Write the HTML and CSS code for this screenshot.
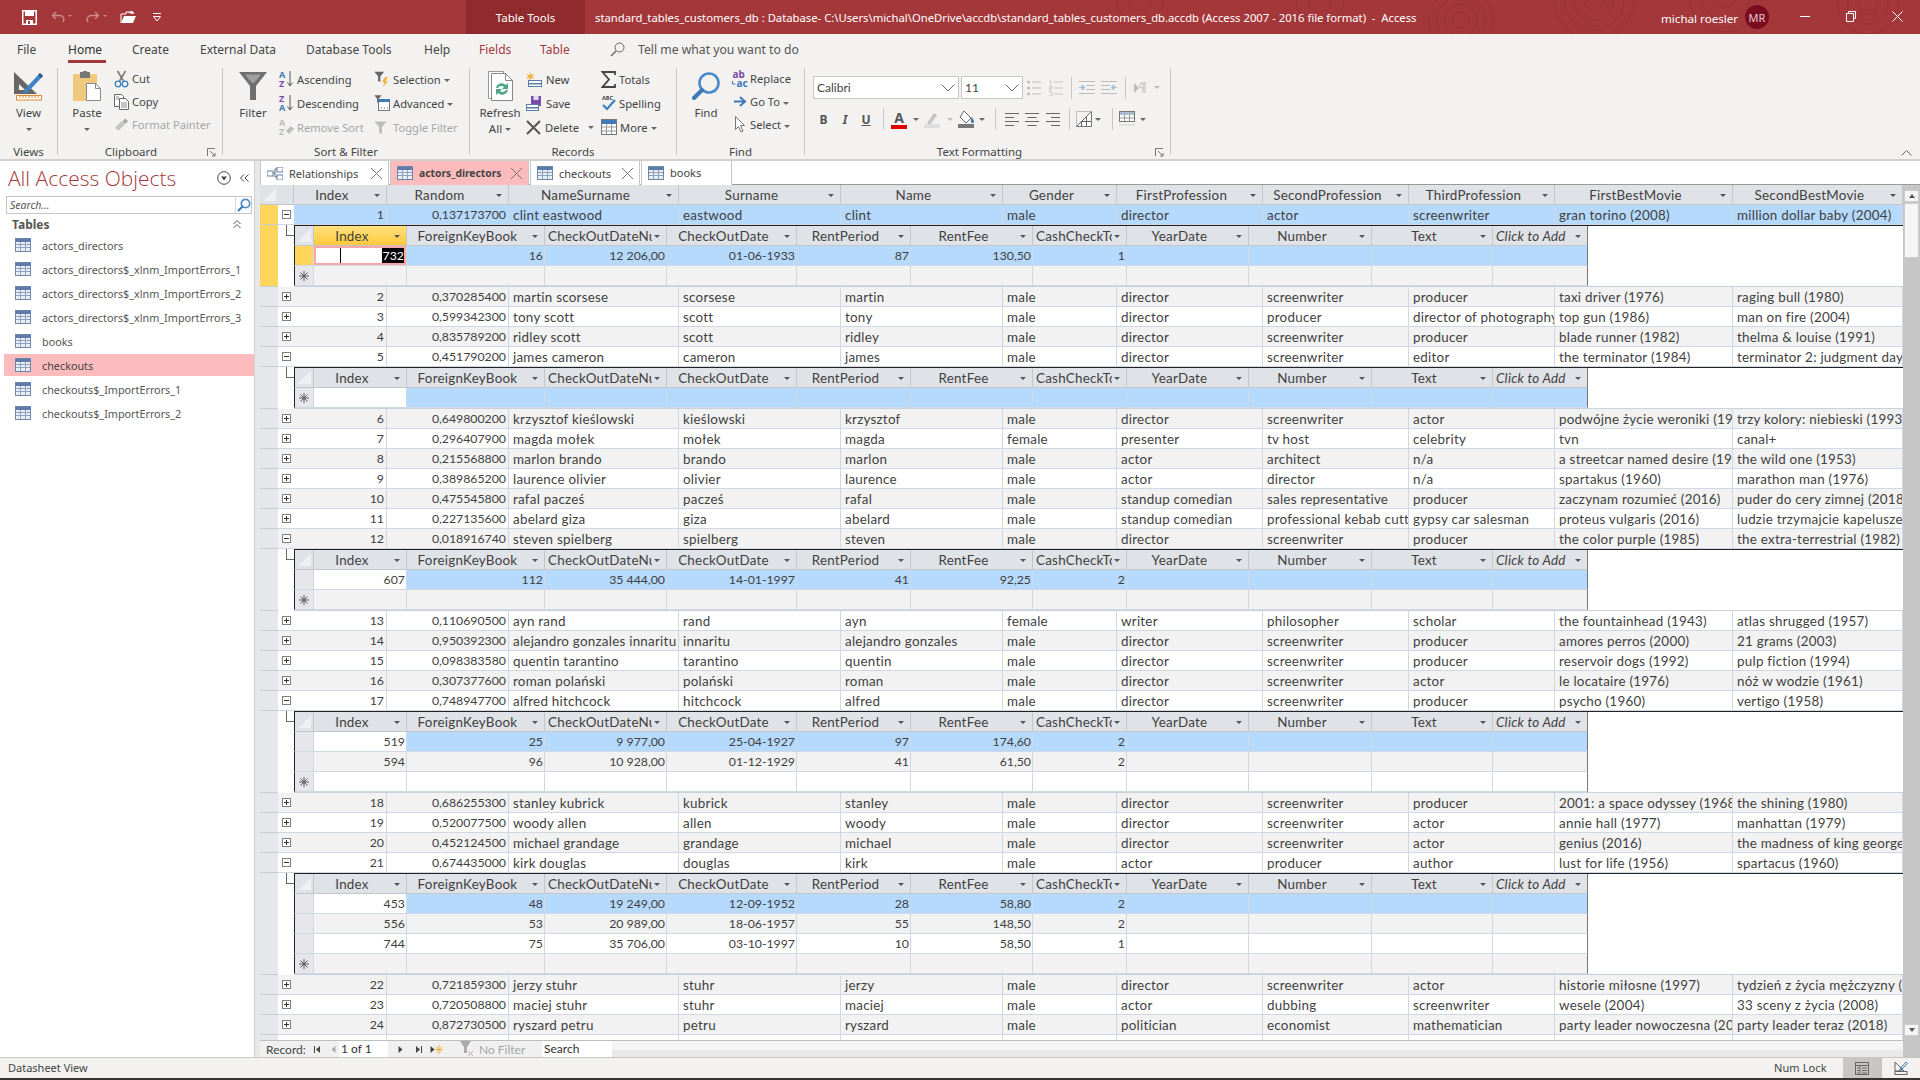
FILE: index.html
```html
<!DOCTYPE html>
<html lang="en">
<head>
<meta charset="utf-8">
<title>standard_tables_customers_db - Access</title>
<link rel="stylesheet" href="styles.css">
</head>
<body>
<svg class="sprite" width="0" height="0" aria-hidden="true">
  <defs>
    <symbol id="tbl" viewBox="0 0 16 14">
      <rect x=".5" y=".5" width="15" height="13" fill="#e9eef6" stroke="#6f86a8"/>
      <rect x="1" y="1" width="14" height="3" fill="#5c7cab"/>
      <path d="M1 6.5h14M1 9.5h14M5.5 4v9M10.5 4v9" stroke="#8ea2c0" fill="none"/>
    </symbol>
    <symbol id="star" viewBox="0 0 10 10">
      <path d="M5 0v10M0 5h10M1.5 1.5l7 7M8.5 1.5l-7 7" stroke="#555" stroke-width="1" fill="none"/>
    </symbol>
    <symbol id="funnel" viewBox="0 0 16 14">
      <path d="M.5 .5h13L8.5 6.5v7h-3v-7z" fill="currentColor"/>
    </symbol>
  </defs>
</svg>

<header class="titlebar">
  <svg class="wood" width="900" height="34" viewBox="0 0 900 34" aria-hidden="true">
    <g fill="none" stroke="#8e2d30" stroke-opacity=".45">
      <circle cx="441" cy="20" r="8"/><circle cx="441" cy="20" r="16"/><circle cx="441" cy="20" r="24"/><circle cx="441" cy="20" r="32"/>
      <circle cx="574" cy="0" r="10"/><circle cx="574" cy="0" r="20"/><circle cx="574" cy="0" r="30"/><circle cx="574" cy="0" r="40"/>
      <circle cx="705" cy="-4" r="12"/><circle cx="705" cy="-4" r="24"/><circle cx="705" cy="-4" r="36"/>
      <circle cx="848" cy="4" r="10"/><circle cx="848" cy="4" r="20"/><circle cx="848" cy="4" r="30"/>
      <circle cx="120" cy="-2" r="12"/><circle cx="120" cy="-2" r="24"/>
      <circle cx="300" cy="0" r="12"/><circle cx="300" cy="0" r="24"/>
    </g>
  </svg>
  <div class="qat">
    <svg class="q-save" width="15" height="15" viewBox="0 0 15 15"><path d="M.75 .75h13.5v13.5H.75z" fill="none" stroke="#fff" stroke-width="1.5"/><path d="M3 1h9v5H3zM4 10h7v4H4z" fill="#fff"/><rect x="6" y="11" width="2" height="3" fill="#a4373a"/></svg>
    <svg class="q-undo" width="22" height="12" viewBox="0 0 22 12"><path d="M5 1L1.5 4.5 5 8M2 4.5h7a4 4 0 0 1 3 6.5" fill="none" stroke="#c98c8e" stroke-width="1.4"/><path d="M17 4h4l-2 2z" fill="#c98c8e"/></svg>
    <svg class="q-redo" width="22" height="12" viewBox="0 0 22 12"><path d="M9 1l3.500 3.500L9 8M12 4.500H5a4 4 0 0 0-3 6.500" fill="none" stroke="#c98c8e" stroke-width="1.4"/><path d="M17 4h4l-2 2z" fill="#c98c8e"/></svg>
    <svg class="q-open" width="17" height="14" viewBox="0 0 17 14"><path d="M1 13V4h5V2h7v2" fill="none" stroke="#fff"/><path d="M1 13l3-7h12l-3 7z" fill="#fff"/><path d="M8 3l4-2 2 3" fill="#fff"/></svg>
    <svg class="q-more" width="8" height="9" viewBox="0 0 8 9"><path d="M0 .5h8" stroke="#fff"/><path d="M.5 3.500h7L4 8z" fill="none" stroke="#fff"/></svg>
  </div>
  <div class="ctx">Table Tools</div>
  <div class="doc-title">standard_tables_customers_db : Database- C:\Users\michal\OneDrive\accdb\standard_tables_customers_db.accdb (Access 2007 - 2016 file format) &nbsp;-&nbsp; Access</div>
  <div class="user">michal roesler</div>
  <div class="avatar">MR</div>
  <div class="win">
    <svg width="10" height="10" viewBox="0 0 10 10"><path d="M0 5.500h10" stroke="#fff"/></svg>
    <svg width="10" height="11" viewBox="0 0 10 11"><path d="M2.500 2.500V.5h7v7h-2M.5 2.500h7v8h-7z" fill="none" stroke="#fff"/></svg>
    <svg width="11" height="11" viewBox="0 0 11 11"><path d="M.5 .5l10 10M10.500 .5l-10 10" stroke="#fff" fill="none"/></svg>
  </div>
</header>

<section class="ribbon">
  <nav class="rtabs">
    <span class="rt">File</span>
    <span class="rt rt-on"><b>Home</b></span>
    <span class="rt">Create</span>
    <span class="rt">External Data</span>
    <span class="rt">Database Tools</span>
    <span class="rt">Help</span>
    <span class="rt rt-red">Fields</span>
    <span class="rt rt-red">Table</span>
    <svg class="tell-ic" width="15" height="15" viewBox="0 0 15 15"><circle cx="9.500" cy="5.500" r="4.500" fill="none" stroke="#666"/><path d="M6 9l-5 5" stroke="#666" stroke-width="1.400"/></svg>
    <span class="rt tell">Tell me what you want to do</span>
  </nav>
  <div class="groups">
    <div class="group g-views">
      <div class="gbody">
        <div class="big bw-views">
          <svg width="31" height="30" viewBox="0 0 31 30"><path d="M1 1v22h23z" fill="#666"/><path d="M6 13v6h6z" fill="#f3f2f1"/><path d="M27 2l3 3-15 16-5 2 2-5z" fill="#3f7fc4"/><path d="M27 2l3 3-2 2-3-3z" fill="#2a5d96"/><rect x="3.500" y="24.500" width="25" height="4.500" fill="#fff" stroke="#e08a2c"/><path d="M7 25v2M10 25v2M13 25v2M16 25v2M19 25v2M22 25v2M25 25v2" stroke="#e08a2c"/></svg>
          <span class="bl">View</span><i class="dd"></i>
        </div>
      </div>
      <div class="glabel">Views</div>
    </div>
    <div class="sep"></div>
    <div class="group g-clip">
      <div class="gbody">
        <div class="big bw-paste">
          <svg width="28" height="30" viewBox="0 0 28 30"><rect x="0" y="3" width="24" height="27" rx="1" fill="#f0c97f"/><rect x="7" y="1" width="10" height="6" fill="#777"/><rect x="10" y="0" width="4" height="3" fill="#777"/><path d="M13.500 12.500h9l5 5v12h-14z" fill="#fff" stroke="#8a8a8a"/><path d="M22.500 12.500v5h5" fill="none" stroke="#8a8a8a"/></svg>
          <span class="bl">Paste</span><i class="dd"></i>
        </div>
        <div class="list l23 lw-clip">
          <div class="it"><svg class="ic" width="14" height="18" viewBox="0 0 14 18"><path d="M3 1l6 10M11 1L5 11" stroke="#777" stroke-width="1.500" fill="none"/><circle cx="3.500" cy="14" r="2.800" fill="none" stroke="#3a7fc1" stroke-width="1.300"/><circle cx="10.500" cy="14" r="2.800" fill="none" stroke="#3a7fc1" stroke-width="1.300"/></svg><span>Cut</span></div>
          <div class="it"><svg class="ic" width="15" height="16" viewBox="0 0 15 16"><path d="M.5 .5h7l2 2v10H.5z" fill="#fff" stroke="#666"/><path d="M5.500 4.500h6l3 3v8h-9z" fill="#fff" stroke="#666"/><path d="M7 9h6M7 11h6M7 13h6M2 3h3M2 5h3" stroke="#888"/></svg><span>Copy</span></div>
          <div class="it off"><svg class="ic" width="16" height="15" viewBox="0 0 16 15"><path d="M1 11l7-7 4 3-7 7z" fill="#c4c4c4"/><path d="M9 4l3-3 3 3-3 3z" fill="#a8a8a8"/></svg><span>Format Painter</span></div>
        </div>
      </div>
      <div class="glabel lb-clip">Clipboard<svg class="launch" width="9" height="9" viewBox="0 0 9 9"><path d="M.5 8V.5H8M3 3l5 5M8 5v3H5" fill="none" stroke="#777"/></svg></div>
    </div>
    <div class="sep"></div>
    <div class="group g-sort">
      <div class="gbody">
        <div class="big bw-filter">
          <svg width="28" height="28" viewBox="0 0 28 28"><path d="M0 0h28L17 14v14h-6V14z" fill="#6f6f6f"/><path d="M6 2.500h16L15 11h-2z" fill="#a0a0a0"/></svg>
          <span class="bl">Filter</span>
        </div>
        <div class="list l24 lw-sort1">
          <div class="it"><svg class="ic" width="15" height="18" viewBox="0 0 15 18"><text x="0" y="8" class="az c-b">A</text><text x="0" y="17" class="az c-p">Z</text><path d="M11 1v14M8.500 12.500L11 16l2.500-3.500" fill="none" stroke="#555"/></svg><span>Ascending</span></div>
          <div class="it"><svg class="ic" width="15" height="18" viewBox="0 0 15 18"><text x="0" y="8" class="az c-p">Z</text><text x="0" y="17" class="az c-b">A</text><path d="M11 1v14M8.500 12.500L11 16l2.500-3.500" fill="none" stroke="#555"/></svg><span>Descending</span></div>
          <div class="it off"><svg class="ic" width="15" height="18" viewBox="0 0 15 18"><text x="0" y="8" class="az c-g">A</text><text x="0" y="17" class="az c-g">Z</text><path d="M7 13l5-5 3 3-5 5z" fill="#bdbdbd"/></svg><span>Remove Sort</span></div>
        </div>
        <div class="list l24">
          <div class="it"><svg class="ic ic-f" width="16" height="16" viewBox="0 0 16 16"><use href="#funnel" width="12" height="11" x="0" y="0" class="c-f"/><path d="M11 6l-3 5h2.500L9 16l5-6h-2.500L14 6z" fill="#f2b33d"/></svg><span class="dda">Selection</span></div>
          <div class="it"><svg class="ic ic-f" width="16" height="16" viewBox="0 0 16 16"><use href="#funnel" width="9" height="8" x="0" y="0" class="c-f"/><rect x="4.500" y="4.500" width="11" height="11" fill="#fff" stroke="#777"/><rect x="4" y="4" width="12" height="3" fill="#3f79b8"/><path d="M7 13h1M10 13h1M13 13h1" stroke="#555"/></svg><span class="dda">Advanced</span></div>
          <div class="it off"><svg class="ic ic-f" width="16" height="16" viewBox="0 0 16 16"><use href="#funnel" width="15" height="15" x="0" y="1" class="c-g2"/></svg><span>Toggle Filter</span></div>
        </div>
      </div>
      <div class="glabel">Sort &amp; Filter</div>
    </div>
    <div class="sep"></div>
    <div class="group g-rec">
      <div class="gbody">
        <div class="big bw-refresh">
          <svg width="25" height="30" viewBox="0 0 25 30"><path d="M.5 .5h15v27H.5z" fill="#fff" stroke="#999"/><path d="M3.500 2.500h14l7 7v20h-21z" fill="#fff" stroke="#888"/><path d="M17.500 2.500v7h7" fill="none" stroke="#888"/><path d="M8 17a6 6 0 0 1 10-3l2-2v6h-6l2-2a4 4 0 0 0-6 1zM20 19a6 6 0 0 1-10 3l-2 2v-6h6l-2 2a4 4 0 0 0 6-1z" fill="#4fa586"/></svg>
          <span class="bl">Refresh</span><span class="bl bl2 dda">All</span>
        </div>
        <div class="list l24 lw-rec">
          <div class="it"><svg class="ic" width="16" height="15" viewBox="0 0 16 15"><path d="M4.500 0l1 3 3-1-2 2.500L8 7 5 6 4 9 3 6 0 7l2-2.500L.5 2l3 1z" fill="#f0b64a"/><rect x="2.500" y="8.500" width="13" height="6" fill="#fff" stroke="#5b7fab"/><rect x="2" y="11" width="14" height="1.500" fill="#5b7fab"/></svg><span>New</span></div>
          <div class="it"><svg class="ic" width="16" height="15" viewBox="0 0 16 15"><rect x="5" y="0" width="10" height="10" fill="#7b4fa8"/><rect x="7.500" y="0" width="5" height="4" fill="#e6ddf0"/><rect x=".5" y="8.500" width="12" height="6" fill="#fff" stroke="#5b7fab"/><rect x="0" y="11" width="13" height="1.500" fill="#5b7fab"/></svg><span>Save</span></div>
          <div class="it"><svg class="ic" width="15" height="15" viewBox="0 0 15 15"><path d="M1 1l13 13M14 1L1 14" stroke="#555" stroke-width="2" fill="none"/></svg><span>Delete</span><i class="dd dd-del"></i></div>
        </div>
        <div class="list l24">
          <div class="it"><svg class="ic" width="15" height="17" viewBox="0 0 15 17"><path d="M14 4V1H1.500L8 8.500 1.500 16H14v-3" fill="none" stroke="#444" stroke-width="1.800"/></svg><span>Totals</span></div>
          <div class="it"><svg class="ic" width="15" height="18" viewBox="0 0 15 18"><text x="1" y="6" class="abc">ABC</text><path d="M2 11l4 4 8-9" fill="none" stroke="#3a7fc1" stroke-width="2.200"/></svg><span>Spelling</span></div>
          <div class="it"><svg class="ic" width="16" height="16" viewBox="0 0 16 16"><rect x=".5" y=".5" width="15" height="15" fill="#fff" stroke="#777"/><rect x="1" y="1" width="14" height="4" fill="#3f79b8"/><path d="M1 8h14M1 12h14M5.500 5v10M10.500 5v10" stroke="#999"/></svg><span class="dda">More</span></div>
        </div>
      </div>
      <div class="glabel">Records</div>
    </div>
    <div class="sep"></div>
    <div class="group g-find">
      <div class="gbody">
        <div class="big bw-find">
          <svg width="28" height="28" viewBox="0 0 28 28"><circle cx="17" cy="11" r="9.500" fill="none" stroke="#4b8bc9" stroke-width="2.600"/><path d="M10 18L2 26" stroke="#3f79b8" stroke-width="4" stroke-linecap="round"/></svg>
          <span class="bl">Find</span>
        </div>
        <div class="list l23 lw-find">
          <div class="it"><svg class="ic" width="17" height="18" viewBox="0 0 17 18"><text x="1" y="8" class="ab c-p">ab</text><text x="5" y="17" class="ab c-b">ac</text><path d="M1 11v3h3" fill="none" stroke="#3f79b8"/></svg><span>Replace</span></div>
          <div class="it"><svg class="ic ic-go" width="12" height="11" viewBox="0 0 12 11"><path d="M0 5.500h10M6 1l5 4.500L6 10" fill="none" stroke="#3f79b8" stroke-width="2"/></svg><span class="dda">Go To</span></div>
          <div class="it"><svg class="ic ic-go" width="10" height="17" viewBox="0 0 10 17"><path d="M.5 .5v13l3-3 2.500 5.500 2-1-2.500-5.500h4z" fill="#fff" stroke="#777"/></svg><span class="dda">Select</span></div>
        </div>
      </div>
      <div class="glabel">Find</div>
    </div>
    <div class="sep"></div>
    <div class="group g-text">
      <div class="gbody tf">
        <div class="tf-row1">
          <div class="combo cw-font"><span>Calibri</span><svg width="14" height="8" viewBox="0 0 14 8"><path d="M.5 .5L7 7 13.500 .5" fill="none" stroke="#666"/></svg></div>
          <div class="combo cw-size"><span>11</span><svg width="14" height="8" viewBox="0 0 14 8"><path d="M.5 .5L7 7 13.500 .5" fill="none" stroke="#666"/></svg></div>
          <div class="cell w22"><svg width="14" height="16" viewBox="0 0 14 16"><path d="M5 2h9M5 8h9M5 14h9" stroke="#bbb"/><circle cx="1.500" cy="2" r="1.500" fill="#bbb"/><circle cx="1.500" cy="8" r="1.500" fill="#bbb"/><circle cx="1.500" cy="14" r="1.500" fill="#bbb"/></svg></div>
          <div class="cell w22"><svg width="14" height="16" viewBox="0 0 14 16"><path d="M5 2h9M5 8h9M5 14h9M1.500 0v4M0 6h3v2H0v2h3M0 12h3v4H0" stroke="#bbb" fill="none" stroke-width=".8"/></svg></div>
          <div class="vsep vs1"></div>
          <div class="cell w22"><svg width="16" height="14" viewBox="0 0 16 14"><path d="M0 .5h16M7 4.500h9M7 8.500h9M0 12.500h16" stroke="#bbb"/><path d="M0 6.500h4M3 4l3 2.500L3 9z" fill="#9fc0dd" stroke="#9fc0dd"/></svg></div>
          <div class="cell w22"><svg width="16" height="14" viewBox="0 0 16 14"><path d="M0 .5h16M0 4.500h9M0 8.500h9M0 12.500h16" stroke="#bbb"/><path d="M16 6.500h-4M13 4l-3 2.500L13 9z" fill="#9fc0dd" stroke="#9fc0dd"/></svg></div>
          <div class="vsep vs2"></div>
          <div class="cell w28"><svg width="12" height="12" viewBox="0 0 12 12"><path d="M0 1l5 5-5 5z" fill="#bbb"/><path d="M8 1h4M8 1a2.500 2.500 0 0 0 0 5h1M9 1v10M11 1v10" stroke="#bbb" fill="none"/></svg></div>
          <i class="dd dd-off"></i>
        </div>
        <div class="tf-row2">
          <b class="fb">B</b><i class="fi">I</i><span class="fu">U</span><div class="vsep"></div>
          <div class="cell fa"><span>A</span></div><i class="dd"></i>
          <div class="cell"><svg width="17" height="18" viewBox="0 0 17 18"><path d="M3 13l7-10 3 2-7 10z" fill="#c4c4c4"/><rect x="0" y="14" width="16" height="4" fill="#dedede"/></svg></div><i class="dd dd-off"></i>
          <div class="cell"><svg width="17" height="18" viewBox="0 0 17 18"><path d="M6 1l7 7-5 5-6-6z" fill="#fff" stroke="#666"/><path d="M13 7c2 2 3 3 3 4.500a1.500 1.500 0 0 1-3 0z" fill="#3f79b8"/><rect x="0" y="14" width="16" height="4" fill="#777"/></svg></div><i class="dd"></i>
          <div class="vsep"></div>
          <div class="cell"><svg class="al" width="14" height="13" viewBox="0 0 14 13"><path d="M0 .5h14M0 4.500h9M0 8.500h14M0 12.500h9" stroke="#666"/></svg></div>
          <div class="cell"><svg class="al" width="14" height="13" viewBox="0 0 14 13"><path d="M0 .5h14M2.500 4.500h9M0 8.500h14M2.500 12.500h9" stroke="#666"/></svg></div>
          <div class="cell"><svg class="al" width="14" height="13" viewBox="0 0 14 13"><path d="M0 .5h14M5 4.500h9M0 8.500h14M5 12.500h9" stroke="#666"/></svg></div>
          <div class="vsep"></div>
          <div class="cell"><svg width="16" height="16" viewBox="0 0 16 16"><path d="M.5 15.500h15V.5z" fill="#fff" stroke="#666"/><path d="M.5 .5h15v15H.5z" fill="none" stroke="#888" stroke-dasharray="1 1"/><path d="M10.500 5v10M5.500 10v5M5 10.500h10" stroke="#666"/></svg></div><i class="dd"></i>
          <div class="vsep"></div>
          <div class="cell"><svg width="16" height="17" viewBox="0 0 16 17"><rect x=".5" y=".5" width="15" height="10" fill="#fff" stroke="#777"/><rect x="1" y="1" width="14" height="3" fill="#aabbd2"/><path d="M1 7h14M5.500 4v6M10.500 4v6" stroke="#999"/><rect x="0" y="13" width="16" height="2" fill="#e2e2e2"/></svg></div><i class="dd"></i>
        </div>
      </div>
      <div class="glabel lb-text">Text Formatting<svg class="launch" width="9" height="9" viewBox="0 0 9 9"><path d="M.5 8V.5H8M3 3l5 5M8 5v3H5" fill="none" stroke="#777"/></svg></div>
    </div>
    <div class="sep"></div>
    <svg class="collapse" width="11" height="6" viewBox="0 0 11 6"><path d="M.5 5.500l5-5 5 5" fill="none" stroke="#666"/></svg>
  </div>
</section>

<main class="main">
  <aside class="nav">
    <div class="nav-head">
      <span class="nav-title">All Access Objects</span>
      <svg class="nav-menu" width="14" height="14" viewBox="0 0 14 14"><circle cx="7" cy="7" r="6.300" fill="none" stroke="#444"/><path d="M4 5.500h6L7 9.500z" fill="#444"/></svg>
      <svg class="nav-shut" width="9" height="8" viewBox="0 0 9 8"><path d="M4 .5L.5 4 4 7.500M8.500 .5L5 4l3.500 3.500" fill="none" stroke="#444"/></svg>
    </div>
    <div class="nav-search"><span>Search...</span><i class="sbtn"><svg width="14" height="14" viewBox="0 0 14 14"><circle cx="8.500" cy="5.500" r="4.200" fill="none" stroke="#4b8bc9" stroke-width="1.700"/><path d="M5.500 8.500L1 13" stroke="#3f79b8" stroke-width="2.200"/></svg></i></div>
    <div class="nav-sec"><span>Tables</span><svg width="8" height="9" viewBox="0 0 8 9"><path d="M.5 4L4 .5 7.500 4M.5 8L4 4.500 7.500 8" fill="none" stroke="#555"/></svg></div>
    <ul class="nav-list">
      <li><svg width="16" height="14"><use href="#tbl"/></svg><span>actors_directors</span></li>
      <li><svg width="16" height="14"><use href="#tbl"/></svg><span>actors_directors$_xlnm_ImportErrors_1</span></li>
      <li><svg width="16" height="14"><use href="#tbl"/></svg><span>actors_directors$_xlnm_ImportErrors_2</span></li>
      <li><svg width="16" height="14"><use href="#tbl"/></svg><span>actors_directors$_xlnm_ImportErrors_3</span></li>
      <li><svg width="16" height="14"><use href="#tbl"/></svg><span>books</span></li>
      <li class="on"><svg width="16" height="14"><use href="#tbl"/></svg><span>checkouts</span></li>
      <li><svg width="16" height="14"><use href="#tbl"/></svg><span>checkouts$_ImportErrors_1</span></li>
      <li><svg width="16" height="14"><use href="#tbl"/></svg><span>checkouts$_ImportErrors_2</span></li>
    </ul>
  </aside>
  <div class="split"></div>
  <div class="doc">
    <div class="doctabs">
      <div class="dt dt-rel"><svg width="16" height="13" viewBox="0 0 16 13"><rect x="0" y="4" width="6" height="5" fill="#fff" stroke="#5c7cab"/><rect x="10" y="0" width="6" height="5" fill="#fff" stroke="#5c7cab"/><rect x="10" y="8" width="6" height="5" fill="#fff" stroke="#5c7cab"/><path d="M6 6h2V2h2M8 6v4h2" fill="none" stroke="#666"/></svg><span>Relationships</span><i class="x"></i></div>
      <div class="dt dt-act"><svg width="16" height="14"><use href="#tbl"/></svg><span>actors_directors</span><i class="x"></i></div>
      <div class="dt dt-chk"><svg width="16" height="14"><use href="#tbl"/></svg><span>checkouts</span><i class="x"></i></div>
      <div class="dt dt-bks"><svg width="16" height="14"><use href="#tbl"/></svg><span>books</span></div>
    </div>
    <div class="sheetarea">
      <div class="sheetcol">
        <div class="sheet">
<table class="grid">
<colgroup><col class="c1"><col class="c2"><col class="c3"><col class="c4"><col class="c5"><col class="c6"><col class="c7"><col class="c8"><col class="c9"><col class="c10"><col class="c11"><col class="c12"><col class="c13"></colgroup>
<thead><tr>
<th colspan="2" class="corner"></th>
<th><div class="h"><span>Index</span></div></th><th><div class="h"><span>Random</span></div></th><th><div class="h"><span>NameSurname</span></div></th><th><div class="h"><span>Surname</span></div></th><th><div class="h"><span>Name</span></div></th><th><div class="h"><span>Gender</span></div></th><th><div class="h"><span>FirstProfession</span></div></th><th><div class="h"><span>SecondProfession</span></div></th><th><div class="h"><span>ThirdProfession</span></div></th><th><div class="h"><span>FirstBestMovie</span></div></th><th><div class="h"><span>SecondBestMovie</span></div></th>
</tr></thead>
<tbody>
<tr class="cur"><td class="s yl"></td><td class="e wh"><i class="bx mn"></i></td><td class="n">1</td><td class="n">0,137173700</td><td>clint eastwood</td><td>eastwood</td><td>clint</td><td>male</td><td>director</td><td>actor</td><td>screenwriter</td><td>gran torino (2008)</td><td>million dollar baby (2004)</td></tr>
<tr class="subrow"><td class="s yl"></td><td class="tree"><div class="tl"></div></td><td colspan="11" class="subc">
<table class="sub"><colgroup><col class="d0"><col class="d1"><col class="d2"><col class="d3"><col class="d4"><col class="d5"><col class="d6"><col class="d7"><col class="d8"><col class="d9"><col class="d10"><col class="d11"></colgroup>
<thead><tr><th class="corner sc"></th><th class="hy"><div class="h"><span>Index</span></div></th><th><div class="h"><span>ForeignKeyBook</span></div></th><th><div class="h hl"><span>CheckOutDateNum</span></div></th><th><div class="h"><span>CheckOutDate</span></div></th><th><div class="h"><span>RentPeriod</span></div></th><th><div class="h"><span>RentFee</span></div></th><th><div class="h hl"><span>CashCheckTotal</span></div></th><th><div class="h"><span>YearDate</span></div></th><th><div class="h"><span>Number</span></div></th><th><div class="h"><span>Text</span></div></th><th class="last"><div class="h hl ca"><span>Click to Add</span></div></th></tr></thead>
<tbody>
<tr class="cur"><td class="ss yl"></td><td class="edit"><span class="ed"><i class="caret"></i><em>732</em></span></td><td class="n">16</td><td class="n">12 206,00</td><td class="n">01-06-1933</td><td class="n">87</td><td class="n">130,50</td><td class="n">1</td><td></td><td></td><td></td><td class="last"></td></tr>
<tr class="gr"><td class="ss"><svg class="st" width="10" height="10"><use href="#star"/></svg></td><td></td><td></td><td></td><td></td><td></td><td></td><td></td><td></td><td></td><td></td><td class="last"></td></tr>
</tbody></table></td></tr>
<tr class="gr"><td class="s"></td><td class="e"><i class="bx"></i></td><td class="n">2</td><td class="n">0,370285400</td><td>martin scorsese</td><td>scorsese</td><td>martin</td><td>male</td><td>director</td><td>screenwriter</td><td>producer</td><td>taxi driver (1976)</td><td>raging bull (1980)</td></tr>
<tr><td class="s"></td><td class="e"><i class="bx"></i></td><td class="n">3</td><td class="n">0,599342300</td><td>tony scott</td><td>scott</td><td>tony</td><td>male</td><td>director</td><td>producer</td><td>director of photography</td><td>top gun (1986)</td><td>man on fire (2004)</td></tr>
<tr class="gr"><td class="s"></td><td class="e"><i class="bx"></i></td><td class="n">4</td><td class="n">0,835789200</td><td>ridley scott</td><td>scott</td><td>ridley</td><td>male</td><td>director</td><td>screenwriter</td><td>producer</td><td>blade runner (1982)</td><td>thelma &amp; louise (1991)</td></tr>
<tr><td class="s"></td><td class="e"><i class="bx mn"></i></td><td class="n">5</td><td class="n">0,451790200</td><td>james cameron</td><td>cameron</td><td>james</td><td>male</td><td>director</td><td>screenwriter</td><td>editor</td><td>the terminator (1984)</td><td>terminator 2: judgment day (1991)</td></tr>
<tr class="subrow"><td class="s"></td><td class="tree"><div class="tl"></div></td><td colspan="11" class="subc">
<table class="sub"><colgroup><col class="d0"><col class="d1"><col class="d2"><col class="d3"><col class="d4"><col class="d5"><col class="d6"><col class="d7"><col class="d8"><col class="d9"><col class="d10"><col class="d11"></colgroup>
<thead><tr><th class="corner sc"></th><th><div class="h"><span>Index</span></div></th><th><div class="h"><span>ForeignKeyBook</span></div></th><th><div class="h hl"><span>CheckOutDateNum</span></div></th><th><div class="h"><span>CheckOutDate</span></div></th><th><div class="h"><span>RentPeriod</span></div></th><th><div class="h"><span>RentFee</span></div></th><th><div class="h hl"><span>CashCheckTotal</span></div></th><th><div class="h"><span>YearDate</span></div></th><th><div class="h"><span>Number</span></div></th><th><div class="h"><span>Text</span></div></th><th class="last"><div class="h hl ca"><span>Click to Add</span></div></th></tr></thead>
<tbody>
<tr class="cur"><td class="ss"><svg class="st" width="10" height="10"><use href="#star"/></svg></td><td class="wc"></td><td></td><td></td><td></td><td></td><td></td><td></td><td></td><td></td><td></td><td class="last"></td></tr>
</tbody></table></td></tr>
<tr class="gr"><td class="s"></td><td class="e"><i class="bx"></i></td><td class="n">6</td><td class="n">0,649800200</td><td>krzysztof kieślowski</td><td>kieślowski</td><td>krzysztof</td><td>male</td><td>director</td><td>screenwriter</td><td>actor</td><td>podwójne życie weroniki (1991)</td><td>trzy kolory: niebieski (1993)</td></tr>
<tr><td class="s"></td><td class="e"><i class="bx"></i></td><td class="n">7</td><td class="n">0,296407900</td><td>magda mołek</td><td>mołek</td><td>magda</td><td>female</td><td>presenter</td><td>tv host</td><td>celebrity</td><td>tvn</td><td>canal+</td></tr>
<tr class="gr"><td class="s"></td><td class="e"><i class="bx"></i></td><td class="n">8</td><td class="n">0,215568800</td><td>marlon brando</td><td>brando</td><td>marlon</td><td>male</td><td>actor</td><td>architect</td><td>n/a</td><td>a streetcar named desire (1951)</td><td>the wild one (1953)</td></tr>
<tr><td class="s"></td><td class="e"><i class="bx"></i></td><td class="n">9</td><td class="n">0,389865200</td><td>laurence olivier</td><td>olivier</td><td>laurence</td><td>male</td><td>actor</td><td>director</td><td>n/a</td><td>spartakus (1960)</td><td>marathon man (1976)</td></tr>
<tr class="gr"><td class="s"></td><td class="e"><i class="bx"></i></td><td class="n">10</td><td class="n">0,475545800</td><td>rafal pacześ</td><td>pacześ</td><td>rafal</td><td>male</td><td>standup comedian</td><td>sales representative</td><td>producer</td><td>zaczynam rozumieć (2016)</td><td>puder do cery zimnej (2018)</td></tr>
<tr><td class="s"></td><td class="e"><i class="bx"></i></td><td class="n">11</td><td class="n">0,227135600</td><td>abelard giza</td><td>giza</td><td>abelard</td><td>male</td><td>standup comedian</td><td>professional kebab cutter</td><td>gypsy car salesman</td><td>proteus vulgaris (2016)</td><td>ludzie trzymajcie kapelusze (2015)</td></tr>
<tr class="gr"><td class="s"></td><td class="e"><i class="bx mn"></i></td><td class="n">12</td><td class="n">0,018916740</td><td>steven spielberg</td><td>spielberg</td><td>steven</td><td>male</td><td>director</td><td>screenwriter</td><td>producer</td><td>the color purple (1985)</td><td>the extra-terrestrial (1982)</td></tr>
<tr class="subrow"><td class="s"></td><td class="tree"><div class="tl"></div></td><td colspan="11" class="subc">
<table class="sub"><colgroup><col class="d0"><col class="d1"><col class="d2"><col class="d3"><col class="d4"><col class="d5"><col class="d6"><col class="d7"><col class="d8"><col class="d9"><col class="d10"><col class="d11"></colgroup>
<thead><tr><th class="corner sc"></th><th><div class="h"><span>Index</span></div></th><th><div class="h"><span>ForeignKeyBook</span></div></th><th><div class="h hl"><span>CheckOutDateNum</span></div></th><th><div class="h"><span>CheckOutDate</span></div></th><th><div class="h"><span>RentPeriod</span></div></th><th><div class="h"><span>RentFee</span></div></th><th><div class="h hl"><span>CashCheckTotal</span></div></th><th><div class="h"><span>YearDate</span></div></th><th><div class="h"><span>Number</span></div></th><th><div class="h"><span>Text</span></div></th><th class="last"><div class="h hl ca"><span>Click to Add</span></div></th></tr></thead>
<tbody>
<tr class="cur"><td class="ss"></td><td class="n wc">607</td><td class="n">112</td><td class="n">35 444,00</td><td class="n">14-01-1997</td><td class="n">41</td><td class="n">92,25</td><td class="n">2</td><td></td><td></td><td></td><td class="last"></td></tr>
<tr class="gr"><td class="ss"><svg class="st" width="10" height="10"><use href="#star"/></svg></td><td></td><td></td><td></td><td></td><td></td><td></td><td></td><td></td><td></td><td></td><td class="last"></td></tr>
</tbody></table></td></tr>
<tr><td class="s"></td><td class="e"><i class="bx"></i></td><td class="n">13</td><td class="n">0,110690500</td><td>ayn rand</td><td>rand</td><td>ayn</td><td>female</td><td>writer</td><td>philosopher</td><td>scholar</td><td>the fountainhead (1943)</td><td>atlas shrugged (1957)</td></tr>
<tr class="gr"><td class="s"></td><td class="e"><i class="bx"></i></td><td class="n">14</td><td class="n">0,950392300</td><td>alejandro gonzales innaritu</td><td>innaritu</td><td>alejandro gonzales</td><td>male</td><td>director</td><td>screenwriter</td><td>producer</td><td>amores perros (2000)</td><td>21 grams (2003)</td></tr>
<tr><td class="s"></td><td class="e"><i class="bx"></i></td><td class="n">15</td><td class="n">0,098383580</td><td>quentin tarantino</td><td>tarantino</td><td>quentin</td><td>male</td><td>director</td><td>screenwriter</td><td>producer</td><td>reservoir dogs (1992)</td><td>pulp fiction (1994)</td></tr>
<tr class="gr"><td class="s"></td><td class="e"><i class="bx"></i></td><td class="n">16</td><td class="n">0,307377600</td><td>roman polański</td><td>polański</td><td>roman</td><td>male</td><td>director</td><td>screenwriter</td><td>actor</td><td>le locataire (1976)</td><td>nóż w wodzie (1961)</td></tr>
<tr><td class="s"></td><td class="e"><i class="bx mn"></i></td><td class="n">17</td><td class="n">0,748947700</td><td>alfred hitchcock</td><td>hitchcock</td><td>alfred</td><td>male</td><td>director</td><td>screenwriter</td><td>producer</td><td>psycho (1960)</td><td>vertigo (1958)</td></tr>
<tr class="subrow"><td class="s"></td><td class="tree"><div class="tl"></div></td><td colspan="11" class="subc">
<table class="sub"><colgroup><col class="d0"><col class="d1"><col class="d2"><col class="d3"><col class="d4"><col class="d5"><col class="d6"><col class="d7"><col class="d8"><col class="d9"><col class="d10"><col class="d11"></colgroup>
<thead><tr><th class="corner sc"></th><th><div class="h"><span>Index</span></div></th><th><div class="h"><span>ForeignKeyBook</span></div></th><th><div class="h hl"><span>CheckOutDateNum</span></div></th><th><div class="h"><span>CheckOutDate</span></div></th><th><div class="h"><span>RentPeriod</span></div></th><th><div class="h"><span>RentFee</span></div></th><th><div class="h hl"><span>CashCheckTotal</span></div></th><th><div class="h"><span>YearDate</span></div></th><th><div class="h"><span>Number</span></div></th><th><div class="h"><span>Text</span></div></th><th class="last"><div class="h hl ca"><span>Click to Add</span></div></th></tr></thead>
<tbody>
<tr class="cur"><td class="ss"></td><td class="n wc">519</td><td class="n">25</td><td class="n">9 977,00</td><td class="n">25-04-1927</td><td class="n">97</td><td class="n">174,60</td><td class="n">2</td><td></td><td></td><td></td><td class="last"></td></tr>
<tr class="gr"><td class="ss"></td><td class="n">594</td><td class="n">96</td><td class="n">10 928,00</td><td class="n">01-12-1929</td><td class="n">41</td><td class="n">61,50</td><td class="n">2</td><td></td><td></td><td></td><td class="last"></td></tr>
<tr><td class="ss"><svg class="st" width="10" height="10"><use href="#star"/></svg></td><td></td><td></td><td></td><td></td><td></td><td></td><td></td><td></td><td></td><td></td><td class="last"></td></tr>
</tbody></table></td></tr>
<tr class="gr"><td class="s"></td><td class="e"><i class="bx"></i></td><td class="n">18</td><td class="n">0,686255300</td><td>stanley kubrick</td><td>kubrick</td><td>stanley</td><td>male</td><td>director</td><td>screenwriter</td><td>producer</td><td>2001: a space odyssey (1968)</td><td>the shining (1980)</td></tr>
<tr><td class="s"></td><td class="e"><i class="bx"></i></td><td class="n">19</td><td class="n">0,520077500</td><td>woody allen</td><td>allen</td><td>woody</td><td>male</td><td>director</td><td>screenwriter</td><td>actor</td><td>annie hall (1977)</td><td>manhattan (1979)</td></tr>
<tr class="gr"><td class="s"></td><td class="e"><i class="bx"></i></td><td class="n">20</td><td class="n">0,452124500</td><td>michael grandage</td><td>grandage</td><td>michael</td><td>male</td><td>director</td><td>screenwriter</td><td>actor</td><td>genius (2016)</td><td>the madness of king george (1994)</td></tr>
<tr><td class="s"></td><td class="e"><i class="bx mn"></i></td><td class="n">21</td><td class="n">0,674435000</td><td>kirk douglas</td><td>douglas</td><td>kirk</td><td>male</td><td>actor</td><td>producer</td><td>author</td><td>lust for life (1956)</td><td>spartacus (1960)</td></tr>
<tr class="subrow"><td class="s"></td><td class="tree"><div class="tl"></div></td><td colspan="11" class="subc">
<table class="sub"><colgroup><col class="d0"><col class="d1"><col class="d2"><col class="d3"><col class="d4"><col class="d5"><col class="d6"><col class="d7"><col class="d8"><col class="d9"><col class="d10"><col class="d11"></colgroup>
<thead><tr><th class="corner sc"></th><th><div class="h"><span>Index</span></div></th><th><div class="h"><span>ForeignKeyBook</span></div></th><th><div class="h hl"><span>CheckOutDateNum</span></div></th><th><div class="h"><span>CheckOutDate</span></div></th><th><div class="h"><span>RentPeriod</span></div></th><th><div class="h"><span>RentFee</span></div></th><th><div class="h hl"><span>CashCheckTotal</span></div></th><th><div class="h"><span>YearDate</span></div></th><th><div class="h"><span>Number</span></div></th><th><div class="h"><span>Text</span></div></th><th class="last"><div class="h hl ca"><span>Click to Add</span></div></th></tr></thead>
<tbody>
<tr class="cur"><td class="ss"></td><td class="n wc">453</td><td class="n">48</td><td class="n">19 249,00</td><td class="n">12-09-1952</td><td class="n">28</td><td class="n">58,80</td><td class="n">2</td><td></td><td></td><td></td><td class="last"></td></tr>
<tr class="gr"><td class="ss"></td><td class="n">556</td><td class="n">53</td><td class="n">20 989,00</td><td class="n">18-06-1957</td><td class="n">55</td><td class="n">148,50</td><td class="n">2</td><td></td><td></td><td></td><td class="last"></td></tr>
<tr><td class="ss"></td><td class="n">744</td><td class="n">75</td><td class="n">35 706,00</td><td class="n">03-10-1997</td><td class="n">10</td><td class="n">58,50</td><td class="n">1</td><td></td><td></td><td></td><td class="last"></td></tr>
<tr class="gr"><td class="ss"><svg class="st" width="10" height="10"><use href="#star"/></svg></td><td></td><td></td><td></td><td></td><td></td><td></td><td></td><td></td><td></td><td></td><td class="last"></td></tr>
</tbody></table></td></tr>
<tr class="gr"><td class="s"></td><td class="e"><i class="bx"></i></td><td class="n">22</td><td class="n">0,721859300</td><td>jerzy stuhr</td><td>stuhr</td><td>jerzy</td><td>male</td><td>director</td><td>screenwriter</td><td>actor</td><td>historie miłosne (1997)</td><td>tydzień z życia mężczyzny (1999)</td></tr>
<tr><td class="s"></td><td class="e"><i class="bx"></i></td><td class="n">23</td><td class="n">0,720508800</td><td>maciej stuhr</td><td>stuhr</td><td>maciej</td><td>male</td><td>actor</td><td>dubbing</td><td>screenwriter</td><td>wesele (2004)</td><td>33 sceny z życia (2008)</td></tr>
<tr class="gr"><td class="s"></td><td class="e"><i class="bx"></i></td><td class="n">24</td><td class="n">0,872730500</td><td>ryszard petru</td><td>petru</td><td>ryszard</td><td>male</td><td>politician</td><td>economist</td><td>mathematician</td><td>party leader nowoczesna (2015)</td><td>party leader teraz (2018)</td></tr>
<tr><td class="s"></td><td class="e"></td><td></td><td></td><td></td><td></td><td></td><td></td><td></td><td></td><td></td><td></td><td></td></tr>
</tbody>
</table>
        </div>
        <div class="recbar">
          <span class="rb-label">Record:</span>
          <svg class="rb-first" width="7" height="7" viewBox="0 0 7 7"><path d="M.5 0v7" stroke="#444"/><path d="M6 0v7L2 3.500z" fill="#444"/></svg>
          <svg class="rb-prev" width="5" height="7" viewBox="0 0 5 7"><path d="M4.500 0v7L.5 3.500z" fill="#aaa"/></svg>
          <span class="rb-box">1 of 1</span>
          <svg class="rb-next" width="5" height="7" viewBox="0 0 5 7"><path d="M.5 0v7l4-3.500z" fill="#444"/></svg>
          <svg class="rb-last" width="7" height="7" viewBox="0 0 7 7"><path d="M6.500 0v7" stroke="#444"/><path d="M1 0v7l4-3.500z" fill="#444"/></svg>
          <svg class="rb-new" width="13" height="9" viewBox="0 0 13 9"><path d="M.5 1v7l4-3.500z" fill="#444"/><path d="M9 0v9M5 4.500h8M6 1.500l6 6M12 1.500l-6 6" stroke="#f0b64a"/></svg>
          <svg class="rb-fil" width="14" height="16" viewBox="0 0 14 16"><path d="M0 0h11L7 6v6H4V6z" fill="#aaa"/><path d="M8 10l5 5M13 10l-5 5" stroke="#c9a0a0"/></svg>
          <span class="rb-nf">No Filter</span>
          <span class="rb-search">Search</span>
          <div class="hbar"></div>
        </div>
      </div>
      <div class="vbar">
        <div class="vb-btn"><i class="up"></i></div>
        <div class="vb-thumb"></div>
        <div class="vb-track"></div>
        <div class="vb-btn"><i class="down"></i></div>
        <div class="vb-corner"></div>
      </div>
    </div>
  </div>
</main>

<footer class="status">
  <span class="st-text">Datasheet View</span>
  <span class="st-num">Num Lock</span>
  <div class="st-view st-on"><svg width="14" height="13" viewBox="0 0 14 13"><rect x=".5" y=".5" width="13" height="12" fill="none" stroke="#666"/><path d="M.5 3.500h13M5 3.500v9M7 6h5M7 8.500h5M7 11h5M2 6h2M2 8.500h2M2 11h2" stroke="#666" fill="none"/></svg></div>
  <div class="st-view"><svg width="14" height="14" viewBox="0 0 14 14"><path d="M1 1v9h9z" fill="none" stroke="#666"/><path d="M12 1l1.500 1.500L7 9 5 10l1-2z" fill="none" stroke="#3f79b8"/><rect x="1" y="10.500" width="12" height="3" fill="none" stroke="#666"/></svg></div>
</footer>
<div class="taskstrip"></div>
</body>
</html>
```

FILE: styles.css
```css
* { box-sizing: border-box; }
html, body { margin: 0; padding: 0; }
body {
  width: 1920px; height: 1080px; overflow: hidden;
  display: flex; flex-direction: column;
  font-family: "Noto Sans", "Open Sans", sans-serif; font-size: 12px; color: #444; background: #f3f2f1;
}
.sprite { position: absolute; }
i, em { font-style: normal; }
ul { list-style: none; margin: 0; padding: 0; }

/* title bar */
.titlebar { position: relative; flex: none; height: 34px; background: #a4373a; color: #fff; display: flex; align-items: center; }
.wood { position: absolute; top: 0; right: 0; pointer-events: none; }
.qat { position: relative; width: 466px; height: 34px; display: flex; align-items: center; padding-left: 22px; flex: none; }
.q-save { margin-right: 14px; }
.q-undo { margin-right: 13px; }
.q-redo { margin-right: 12px; }
.q-open { margin-right: 16px; }
.ctx { position: relative; flex: none; width: 119px; height: 34px; background: #8f2b2e; display: flex; align-items: center; justify-content: center; font-size: 11.5px; }
.doc-title { position: relative; flex: none; width: 1076px; padding-left: 10px; font-size: 11.28px; white-space: nowrap; }
.user { position: relative; flex: none; width: 84px; font-size: 11.6px; padding-top: 2px; white-space: nowrap; }
.avatar { position: relative; flex: none; width: 24px; height: 24px; border-radius: 50%; background: #7a0c20; color: #e6c6d0; font-size: 11px; display: flex; align-items: center; justify-content: center; }
.win { position: relative; flex: none; width: 151px; display: flex; align-items: center; padding-left: 31px; gap: 36px; margin-top: -2px; }

/* ribbon */
.ribbon { flex: none; height: 127px; background: #f3f2f1; border-bottom: 2px solid #d2d0ce; }
.rtabs { height: 30px; display: grid; grid-template-columns: 51px 64px 68px 106px 118px 55px 61px 70px 30px 1fr; align-items: center; padding-left: 17px; font-size: 12px; color: #444; }
.rt-on { color: #333; }
.rt-on b { display: inline-block; font-weight: 400; height: 28px; line-height: 30px; border-bottom: 3px solid #a4373a; width: 38px; }
.rt-red { color: #a4373a; }
.tell { color: #555; font-size: 12.2px; margin-left: -2px; }
.groups { position: relative; height: 95px; display: flex; }
.sep { flex: none; width: 1px; height: 87px; margin-top: 4px; background: #c8c6c4; }
.group { flex: none; height: 95px; display: flex; flex-direction: column; }
.gbody { flex: none; height: 80px; padding-top: 7px; display: flex; }
.glabel { position: relative; height: 15px; line-height: 15px; text-align: center; font-size: 11.5px; color: #444; }
.lb-clip { padding-right: 18px; }
.lb-text { padding-right: 16px; }
.launch { position: absolute; right: 6px; top: 4px; }
.g-views { width: 57px; }
.g-clip { width: 164px; }
.g-sort { width: 246px; }
.g-rec { width: 206px; }
.g-find { width: 127px; }
.g-text { width: 365px; }
.big { flex: none; display: flex; flex-direction: column; align-items: center; }
.big svg { flex: none; height: 30px; }
.bl { height: 16px; line-height: 16px; margin-top: 4px; font-size: 11.5px; }
.bl2 { margin-top: 0; }
.dd { display: inline-block; width: 0; height: 0; border: 3px solid transparent; border-top: 3.5px solid #666; border-bottom: 0; }
.big .dd { margin-top: 7px; }
.dda::after { content: ""; display: inline-block; vertical-align: middle; margin-left: 3px; border: 3px solid transparent; border-top: 3.5px solid #666; border-bottom: 0; }
.dd-off { border-top-color: #bbb; }
.bw-views { width: 57px; }
.bw-paste { width: 54px; margin-left: 2px; }
.bw-filter { width: 48px; margin-left: 6px; }
.bw-refresh { width: 44px; margin-left: 8px; }
.bw-find { width: 48px; margin-left: 5px; }
.list { flex: none; display: flex; flex-direction: column; margin-top: -4px; font-size: 11.2px; }
.l23 .it { height: 23px; }
.l24 .it { height: 24px; }
.it { display: flex; align-items: center; white-space: nowrap; }
.it .ic { flex: none; margin-right: 3px; }
.it.off { color: #a6a6a6; }
.lw-clip { width: 100px; }
.lw-clip .ic { width: 18px; padding-right: 3px; margin-right: 0; }
.lw-sort1 { width: 95px; margin-left: 2px; }
.ic-f { margin-right: 3px; }
.lw-rec { width: 75px; margin-left: 4px; }
.lw-rec .ic { margin-right: 4px; }
.lw-rec .dd-del { margin-left: 9px; }
.lw-find { width: 70px; }
.lw-find .ic { width: 20px; margin-right: 0; }
.az { font: 700 9px "Noto Sans", sans-serif; }
.abc { font: 700 5.5px "Noto Sans", sans-serif; fill: #444; }
.ab { font: 700 10px "Noto Sans", sans-serif; }
.c-b { fill: #3f79b8; }
.c-p { fill: #7b4fa8; }
.c-g { fill: #bbb; }
.c-f { color: #666; }
.c-g2 { color: #bdbdbd; }
.tf { display: block; padding: 12px 0 0 8px; }
.tf-row1 { display: flex; align-items: center; height: 23px; }
.combo { display: flex; align-items: center; justify-content: space-between; height: 23px; background: #fff; border: 1px solid #c8c6c4; padding: 0 3px; font-family: "Lato", sans-serif; font-size: 12px; }
.cw-font { width: 146px; margin-right: 2px; }
.cw-size { width: 62px; }
.cell { display: flex; align-items: center; justify-content: center; }
.w22 { width: 22px; }
.w28 { width: 28px; }
.vsep { width: 1px; height: 22px; background: #c8c6c4; }
.vs1 { margin: 0 4px; }
.vs2 { margin: 0 0 0 5px; }
.tf-row2 { display: grid; grid-template-columns: 21px 22px 20px 15px 16px 17px 17px 17px 17px 13px 14px 19px 22px 19px 15px 14px 14px 14px 16px 16px; justify-items: center; align-items: center; height: 24px; margin-top: 8px; }
.fb, .fi, .fu { font-size: 12px; color: #555; font-weight: 700; }
.fi { font-style: italic; }
.fu { text-decoration: underline; }
.fa span { display: block; width: 16px; text-align: center; font-weight: 700; font-size: 14px; line-height: 15px; color: #555; border-bottom: 4px solid #e00000; }
.collapse { position: absolute; left: 1901px; top: 86px; }

/* main */
.main { flex: 1; min-height: 0; display: flex; background: #fff; }
.nav { flex: none; width: 254px; background: #fff; }
.split { flex: none; width: 6px; background: #e7e7e7; border-left: 1px solid #d0d0d0; }
.nav-head { height: 35px; display: flex; align-items: center; padding: 0 0 2px 8px; }
.nav-title { flex: 1; font-family: "Open Sans", sans-serif; font-weight: 300; font-size: 21px; color: #a4373a; white-space: nowrap; }
.nav-menu { margin-right: 9px; }
.nav-shut { margin-right: 5px; }
.nav-search { height: 18px; margin: 0 2px 0 6px; border: 1px solid #c8c6c4; display: flex; align-items: center; justify-content: space-between; padding-left: 3px; font-size: 10.5px; font-style: italic; color: #555; }
.sbtn { width: 16px; height: 16px; display: flex; align-items: center; justify-content: center; border-left: 1px solid #d8d8d8; }
.nav-sec { height: 21px; display: flex; align-items: center; justify-content: space-between; padding: 0 13px 0 12px; font-weight: 700; color: #555; }
.nav-list { margin-top: -2px; }
.nav-list li { height: 24px; display: flex; align-items: center; padding-left: 15px; gap: 11px; font-size: 10.8px; color: #555; white-space: nowrap; }
.nav-list li.on { background: #fcbcbd; margin: 1px 0 1px 4px; padding-left: 11px; color: #444; height: 22px; }

.doc { flex: 1; min-width: 0; display: flex; flex-direction: column; }
.doctabs { flex: none; height: 24px; display: flex; border-bottom: 1px solid #9a9a9a; background: #fff; font-size: 11px; }
.dt { flex: none; height: 24px; display: flex; align-items: center; padding-left: 6px; border: 1px solid #c8c8c8; border-bottom: 0; border-top: 0; background: #fff; white-space: nowrap; gap: 6px; margin-right: 1px; }
.dt > span { flex: 1; }
.dt-rel { width: 129px; }
.dt-act { width: 139px; background: #fcbcbd; font-weight: 700; font-size: 10.3px; }
.dt-chk { width: 110px; }
.dt-bks { width: 91px; border-bottom: 1px solid #fff; }
.x { flex: none; width: 11px; height: 11px; margin-right: 6px; background:
  linear-gradient(45deg, transparent 46%, #777 46%, #777 54%, transparent 54%),
  linear-gradient(-45deg, transparent 46%, #777 46%, #777 54%, transparent 54%); }
.sheetarea { flex: 1; min-height: 0; display: flex; }
.sheetcol { flex: none; width: 1643px; display: flex; flex-direction: column; }
.sheet { height: 855px; overflow: hidden; background: #fff; }

/* datasheet */
.grid, .sub { table-layout: fixed; border-collapse: separate; border-spacing: 0; font-family: "Lato", sans-serif; font-size: 13.4px; letter-spacing: .25px; color: #3f3f3f; }
.grid { width: 1643px; }
.sub { width: 1294px; }
.c1 { width: 18px; } .c2 { width: 16px; } .c3 { width: 93px; } .c4 { width: 122px; } .c5 { width: 170px; } .c6 { width: 162px; } .c7 { width: 162px; } .c8 { width: 114px; } .c9 { width: 146px; } .c10 { width: 146px; } .c11 { width: 146px; } .c12 { width: 178px; } .c13 { width: 170px; }
.d0 { width: 20px; } .d1 { width: 93px; } .d2 { width: 138px; } .d3 { width: 122px; } .d4 { width: 130px; } .d5 { width: 114px; } .d6 { width: 122px; } .d7 { width: 94px; } .d8 { width: 122px; } .d9 { width: 123px; } .d10 { width: 121px; } .d11 { width: 95px; }
th { height: 20px; padding: 0; background: #dfe2e6; border-right: 1px solid #c3c6cb; border-bottom: 1px solid #c3c6cb; font-weight: 400; vertical-align: top; }
.h { display: flex; align-items: center; height: 17px; margin-top: 1px; }
.h > span { flex: 1; min-width: 0; overflow: hidden; white-space: nowrap; text-align: center; }
.h::after { content: ""; flex: none; margin: 2px 6px 0 4px; border: 3px solid transparent; border-top: 3.5px solid #555; border-bottom: 0; }
.hl > span { text-align: left; padding-left: 3px; }
.hl::after { margin-left: 2px; }
.ca { font-style: italic; }
.corner { background: linear-gradient(to bottom right, transparent 50%, #eef0f2 50%) 3px 3px / 13px 13px no-repeat, #dfe2e6; }
.hy { background: linear-gradient(#ffe27f, #ffc83d); }
td { height: 20px; padding: 0 2px 0 4px; background: #fff; border-right: 1px solid #d0d7e5; border-bottom: 1px solid #d0d7e5; white-space: nowrap; overflow: hidden; }
tr.gr > td { background: #f2f2f2; }
tr.cur > td { background: #b6d9fe; }
td.n { text-align: right; font-size: 12.3px; letter-spacing: 0; }
.sub td.n { padding-right: 1px; }
td.s { padding: 0; background: #e5e7ea !important; border-right: 0; border-bottom: 1px solid #c9ccd1; }
td.yl { background: #ffd65c !important; }
td.e { padding: 0 0 0 4px; border-right: 0; }
td.wh { background: #fff !important; }
.bx { display: block; width: 9px; height: 9px; border: 1px solid #808080; background:
  linear-gradient(#333, #333) center / 5px 1px no-repeat,
  linear-gradient(#333, #333) center / 1px 5px no-repeat, #fff; }
.bx.mn { background: linear-gradient(#333, #333) center / 5px 1px no-repeat, #fff; }
.subrow > td.s { vertical-align: top; }
td.tree { padding: 0; border: 0; background: #fff !important; vertical-align: top; }
.tl { width: 8px; height: 11px; margin-left: 8px; border-left: 1px solid #666; border-bottom: 1px solid #666; }
td.subc { padding: 0; border-right: 0; border-top: 1px solid #222; border-bottom: 1px solid #c9d0de; background: #fff !important; vertical-align: top; }
td.subc .sub td:first-child, td.subc .sub th:first-child { border-left: 1px solid #222; }
td.ss { padding: 0; background: #e5e7ea !important; border-right: 1px solid #d0d7e5; border-bottom: 1px solid #d0d7e5; text-align: center; }
td.ss.yl { background: #ffd65c !important; }
.st { display: block; margin: 0 auto; }
tr.cur > td.wc { background: #fff; }
.sub .last { border-right: 1px solid #777; }
td.edit { padding: 0; background: #fff !important; }
.ed { display: flex; align-items: stretch; justify-content: flex-end; height: 19px; border: 2px solid #f9a7a7; padding-left: 24px; font-size: 12.3px; letter-spacing: 0; }
.ed .caret { width: 1px; height: 15px; background: #000; margin-right: auto; }
.ed em { background: #000; color: #fff; padding: 0 0 0 1px; line-height: 15px; }

/* record navigation */
.recbar { flex: none; height: 17px; display: flex; align-items: center; background: #f0f0f0; border-top: 1px solid #bdbdbd; padding-left: 6px; font-family: "Lato", sans-serif; font-size: 12px; }
.rb-label { width: 48px; }
.rb-first { margin-right: 10px; }
.rb-prev { margin-right: 3px; }
.rb-box { width: 49px; height: 16px; line-height: 16px; background: #fff; padding-left: 2px; color: #333; }
.rb-next { margin: 0 12px 0 10px; }
.rb-last { margin-right: 8px; }
.rb-new { margin-right: 17px; }
.rb-fil { margin-right: 5px; }
.rb-nf { width: 63px; color: #a6a6a6; }
.rb-search { width: 70px; height: 16px; line-height: 16px; background: #fff; padding-left: 2px; color: #333; }
.hbar { flex: 1; height: 16px; background: linear-gradient(#f4f4f4 55%, #e9e9e9 55%); }
.vbar { flex: none; width: 17px; display: flex; flex-direction: column; background: #c6c6c6; }
.vb-btn { flex: none; width: 15px; height: 12px; margin: 5px 0 1px 1px; background: #f5f5f5; border: 1px solid #ccc; display: flex; align-items: center; justify-content: center; }
.vb-thumb { flex: none; width: 15px; height: 55px; margin-left: 1px; background: #f5f5f5; border: 1px solid #ccc; }
.vb-track { flex: 1; }
.vb-corner { flex: none; height: 20px; }
.up, .down { width: 0; height: 0; border: 3px solid transparent; }
.up { border-bottom: 4px solid #555; border-top: 0; }
.down { border-top: 4px solid #555; border-bottom: 0; }

/* status bar */
.status { flex: none; height: 21px; background: #f3f2f1; border-top: 1px solid #c8c6c4; display: flex; align-items: center; padding-left: 8px; font-size: 11px; color: #444; }
.st-text { flex: 1; padding-bottom: 2px; }
.st-num { width: 69px; letter-spacing: .1px; padding-bottom: 1px; }
.st-view { width: 38.5px; height: 20px; display: flex; align-items: center; justify-content: center; }
.st-on { background: #c8c6c4; }
.taskstrip { flex: none; height: 2px; background: #333; }
```
